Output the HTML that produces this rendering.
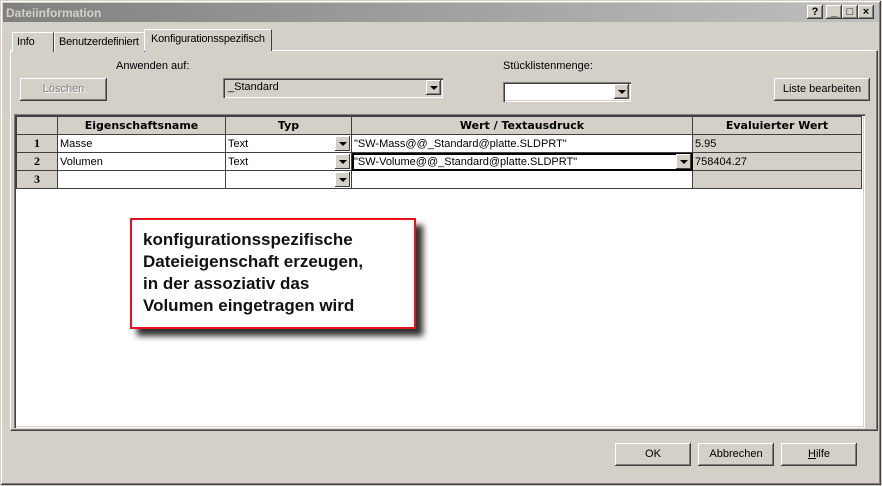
<!DOCTYPE html>
<html><head><meta charset="utf-8"><style>
*{box-sizing:border-box;margin:0;padding:0}
body{width:882px;height:486px;background:#d4d0c8;font-family:"Liberation Sans",Arial,sans-serif;font-size:11px;position:relative;overflow:hidden;color:#000}
.a{position:absolute}
.title{left:3px;top:3px;width:876px;height:19px;background:linear-gradient(90deg,#808080,#c0c0c0);color:#d4d0c8;font-weight:bold;font-size:12px;padding:3px 3px}
.win{left:0;top:0;width:882px;height:486px;border:1px solid #d4d0c8;box-shadow:inset -1px -1px #404040,inset 1px 1px #fff,inset -2px -2px #808080}
.tb{width:16px;height:14px;top:5px;background:#d4d0c8;box-shadow:inset -1px -1px #404040,inset 1px 1px #fff,inset -2px -2px #808080;font-size:11px;font-weight:bold;text-align:center;line-height:14px}
.btn{background:#d4d0c8;box-shadow:inset -1px -1px #404040,inset 1px 1px #fff,inset -2px -2px #808080;text-align:center;line-height:22px;height:23px}
.tab{height:20px;border:1px solid #fff;border-right:1px solid #404040;border-bottom:none;padding:3px 4px;background:#d4d0c8;white-space:nowrap;letter-spacing:-0.2px}
.sunk{background:#fff;box-shadow:inset 1px 1px #808080,inset 2px 2px #404040,inset -1px -1px #fff,inset -2px -2px #d4d0c8}
.dd{width:15px;height:15px;background:#d4d0c8;box-shadow:inset -1px -1px #404040,inset 1px 1px #fff,inset -2px -2px #808080}
.dd:after{content:"";position:absolute;left:4px;top:6px;border-left:4px solid transparent;border-right:4px solid transparent;border-top:4px solid #000}
table{border-collapse:collapse;position:absolute;left:16px;top:116px}
td{border:1px solid #404040;height:18px;padding:0 2px;font-size:11px;position:relative;background:#fff}
th{border:1px solid #404040;height:18px;background:#d4d0c8;font-family:"DejaVu Sans",sans-serif;font-size:11px}
td.n{background:#d4d0c8;text-align:center;font-weight:bold;font-family:"Liberation Serif",serif;font-size:12px}
td.g{background:#d4d0c8}
.cd{position:absolute;right:1px;top:1px;width:15px;height:15px;background:#d4d0c8;box-shadow:inset -1px -1px #404040,inset 1px 1px #fff}
.cd:after{content:"";position:absolute;left:4px;top:6px;border-left:4px solid transparent;border-right:4px solid transparent;border-top:4px solid #000}
</style></head><body>
<div class="a win"></div>
<div class="a title">Dateiinformation</div>
<div class="a tb" style="left:807px">?</div>
<div class="a tb" style="left:826px">_</div>
<div class="a tb" style="left:842px">□</div>
<div class="a tb" style="left:858px">×</div>
<div class="a" style="left:10px;top:50px;width:868px;height:381px;border:1px solid #fff;border-right-color:#404040;border-bottom-color:#404040;box-shadow:inset -1px -1px #808080"></div>
<div class="a tab" style="left:12px;top:32px;width:42px">Info</div>
<div class="a tab" style="left:54px;top:32px;width:91px">Benutzerdefiniert</div>
<div class="a tab" style="left:144px;top:29px;width:128px;height:22px;border-bottom:none;padding-left:6px">Konfigurationsspezifisch</div>
<div class="a btn" style="left:20px;top:78px;width:87px;color:#808080;text-shadow:1px 1px #fff">Löschen</div>
<div class="a" style="left:116px;top:60px">Anwenden auf:</div>
<div class="a sunk" style="left:223px;top:78px;width:220px;height:20px;background:#d4d0c8;padding:3px 5px">_Standard</div>
<div class="a dd" style="left:426px;top:80px"></div>
<div class="a" style="left:503px;top:60px">Stücklistenmenge:</div>
<div class="a sunk" style="left:503px;top:82px;width:128px;height:20px"></div>
<div class="a dd" style="left:614px;top:84px"></div>
<div class="a btn" style="left:774px;top:78px;width:96px">Liste bearbeiten</div>
<div class="a sunk" style="left:14px;top:114px;width:851px;height:314px"></div>
<table>
<tr><th style="width:41px"></th><th style="width:168px">Eigenschaftsname</th><th style="width:126px">Typ</th><th style="width:341px">Wert / Textausdruck</th><th style="width:169px">Evaluierter Wert</th></tr>
<tr><td class="n">1</td><td>Masse</td><td>Text<span class="cd"></span></td><td>"SW-Mass@@_Standard@platte.SLDPRT"</td><td class="g">5.95</td></tr>
<tr><td class="n">2</td><td>Volumen</td><td>Text<span class="cd"></span></td><td style="outline:2px solid #000;outline-offset:-2px">"SW-Volume@@_Standard@platte.SLDPRT"<span class="cd"></span></td><td class="g">758404.27</td></tr>
<tr><td class="n">3</td><td></td><td><span class="cd"></span></td><td></td><td class="g"></td></tr>
</table>
<div class="a" style="left:130px;top:218px;width:286px;height:111px;border:2px solid #e8101c;background:#fff;box-shadow:7px 7px 6px #303030;padding:9px 11px;font-weight:bold;font-size:17px;line-height:22px;color:#111">konfigurationsspezifische<br>Dateieigenschaft erzeugen,<br>in der assoziativ das<br>Volumen eingetragen wird</div>
<div class="a btn" style="left:615px;top:443px;width:76px">OK</div>
<div class="a btn" style="left:698px;top:443px;width:76px">Abbrechen</div>
<div class="a btn" style="left:781px;top:443px;width:76px"><u>H</u>ilfe</div>
</body></html>
